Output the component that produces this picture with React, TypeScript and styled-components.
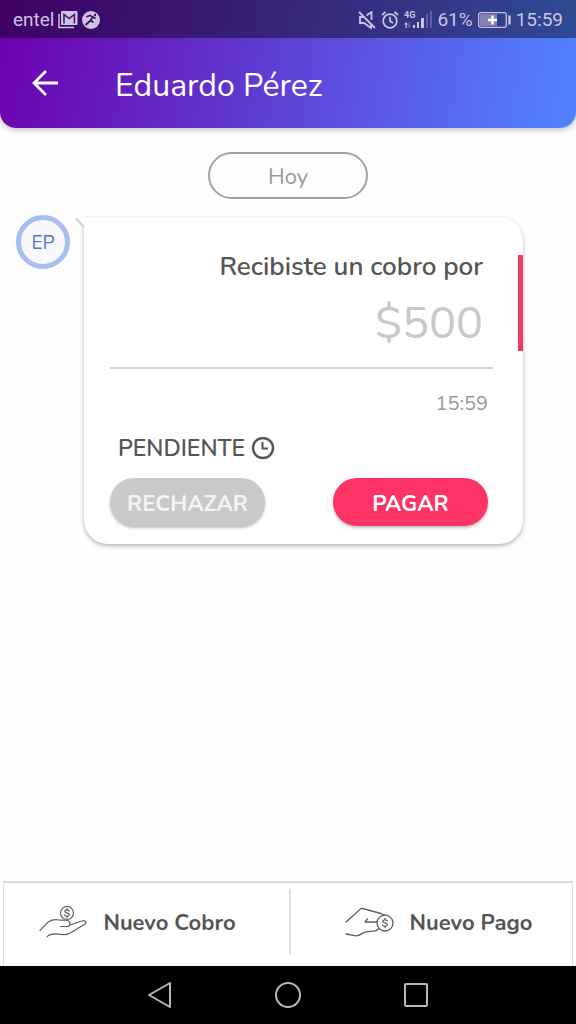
import React from "react";
import styled, { createGlobalStyle } from "styled-components";

const GlobalStyle = createGlobalStyle`
  *, *::before, *::after { box-sizing: border-box; }
  body {
    margin: 0;
    background: #fefefe;
    color: #555;
    font-family: Nunito, "Open Sans", "Noto Sans", sans-serif;
  }
  button { font-family: inherit; border: 0; padding: 0; cursor: pointer; }
  svg { display: block; flex: none; }
`;

const Screen = styled.div`
  display: flex;
  flex-direction: column;
  min-height: 100vh;
`;

const Header = styled.header`
  overflow: hidden;
  border-radius: 0 0 16px 16px;
  background: linear-gradient(100deg, #6d00ae 0%, #6031cb 38%, #5a5de8 70%, #5083ff 100%);
  box-shadow: 0 2px 6px rgba(0, 0, 0, 0.25);
`;

const StatusBar = styled.div`
  display: flex;
  align-items: center;
  justify-content: space-between;
  height: 38px;
  padding: 1px 13px 0;
  background: rgba(0, 0, 0, 0.42);
  color: #cdc3e3;
  font-family: Roboto, sans-serif;
  font-size: 19px;
  line-height: 24px;
`;

const StatusGroup = styled.div<{ $gap: number }>`
  display: flex;
  align-items: center;
  gap: ${(p) => p.$gap}px;
`;

const TitleBar = styled.div`
  display: flex;
  align-items: center;
  gap: 55px;
  height: 90px;
  padding: 0 30px;
`;

const BackButton = styled.button`
  background: none;
  color: #fff;
`;

const Title = styled.h1`
  margin: 0;
  padding-top: 5px;
  color: #fff;
  font-size: 32px;
  font-weight: 400;
  line-height: 40px;
`;

const Conversation = styled.main`
  display: flex;
  flex: 1;
  flex-direction: column;
  gap: 16px;
  padding: 24px 53px 24px 16px;
`;

const DayLabel = styled.div`
  align-self: center;
  width: 160px;
  height: 47px;
  margin-left: 37px;
  border: 2px solid #a2a2a2;
  border-radius: 24px;
  color: #999;
  font-size: 22px;
  line-height: 46px;
  text-align: center;
`;

const Message = styled.article`
  display: flex;
  align-items: flex-start;
  gap: 14px;
`;

const Avatar = styled.div`
  flex: none;
  width: 54px;
  height: 54px;
  border: 5px solid #a8bdf2;
  border-radius: 50%;
  background: #f9f9fb;
  color: #4d76cc;
  font-size: 19px;
  line-height: 46px;
  text-align: center;
`;

const Card = styled.section`
  position: relative;
  flex: 1;
  margin-top: 2px;
  padding: 30px 30px 18px 26px;
  border-radius: 0 24px 24px 24px;
  background: #fff;
  box-shadow: 0 2px 4px rgba(0, 0, 0, 0.3);
`;

const BubbleTail = styled.svg`
  position: absolute;
  top: 0;
  left: -9px;
`;

const Accent = styled.span`
  position: absolute;
  top: 38px;
  right: 0;
  width: 5px;
  height: 96px;
  background: #ee3a68;
`;

const Charge = styled.div`
  padding: 0 10px 13px 0;
  border-bottom: 2px solid #d2d2d2;
  text-align: right;
`;

const ChargeLabel = styled.h2`
  margin: 0;
  font-size: 26px;
  font-weight: 600;
  line-height: 40px;
`;

const Amount = styled.p`
  margin: 7px 0 0;
  color: #c8c8c8;
  font-size: 45px;
  font-weight: 400;
  line-height: 60px;
`;

const Time = styled.time`
  display: block;
  padding: 20px 5px 0 0;
  color: #999;
  font-size: 20px;
  font-weight: 400;
  line-height: 30px;
  text-align: right;
`;

const Status = styled.div`
  display: flex;
  align-items: center;
  gap: 6px;
  padding: 14px 8px 13px;
  font-size: 23px;
  font-weight: 600;
  line-height: 32px;
`;

const Actions = styled.div`
  display: flex;
  justify-content: space-between;
  padding-right: 5px;
`;

const ActionButton = styled.button<{ $primary?: boolean }>`
  width: 155px;
  height: 48px;
  padding-top: 3px;
  border-radius: 24px;
  background: ${(p) => (p.$primary ? "#fd3265" : "#c9c9c9")};
  box-shadow: 0 2px 3px rgba(0, 0, 0, 0.25);
  color: ${(p) => (p.$primary ? "#fff" : "#f5f5f5")};
  font-size: 22px;
  font-weight: 700;
  line-height: 32px;
`;

const Shortcuts = styled.nav`
  display: flex;
  height: 85px;
  margin: 0 3px;
  padding: 6px 0 12px;
  border: 1px solid #e2e2e2;
  border-top: 2px solid #d8d8d8;
  border-bottom: 0;
  background: #fff;
`;

const Shortcut = styled.button`
  display: flex;
  flex: 1;
  align-items: center;
  justify-content: center;
  gap: 16px;
  padding: 3px 18px 0 0;
  background: none;
  color: #555;
  font-size: 22px;
  font-weight: 700;
  line-height: 32px;

  & + & {
    padding: 3px 0 0 14px;
    border-left: 2px solid #dedede;
  }
`;

const SystemNav = styled.nav`
  display: flex;
  align-items: center;
  justify-content: center;
  gap: 100px;
  height: 58px;
  background: #000;
`;

const SystemButton = styled.button`
  background: none;
  color: #b8b8b8;
`;

const MailIcon = () => (
  <svg width="20" height="18" viewBox="0 0 20 18" fill="none" stroke="currentColor">
    <path d="M1 3v13.500h15" strokeWidth="1.500" />
    <rect x="3" y="0" width="16.500" height="14" rx="1" fill="currentColor" stroke="none" />
    <path d="M6 12.500V3.500l5.200 4 5.200-4v9" stroke="#3b136b" strokeWidth="1.500" />
  </svg>
);

const RunnerIcon = () => (
  <svg width="18" height="18" viewBox="0 0 18 18" fill="none">
    <circle cx="9" cy="9" r="9" fill="currentColor" />
    <g stroke="#3b136b" strokeWidth="1.800" strokeLinecap="round" strokeLinejoin="round">
      <path d="M5 5.500l3-1 3 1.500-2.500 3.500L4 13.500M8.500 9.500l2.500 1.500M10.500 6l2.500 1" />
    </g>
    <circle cx="13" cy="4" r="1.200" fill="#3b136b" />
    <circle cx="8" cy="14.800" r="1" fill="#e8d98a" />
  </svg>
);

const MuteIcon = () => (
  <svg width="18" height="18" viewBox="0 0 18 18" fill="none" stroke="currentColor" strokeWidth="1.800">
    <path d="M1 1l16 16M6 6H2v6h4l7 5v-4M8.500 4.500L13.500 1v8" />
  </svg>
);

const AlarmIcon = () => (
  <svg width="18" height="18" viewBox="0 0 18 18" fill="none" stroke="currentColor" strokeWidth="1.700">
    <circle cx="9" cy="10" r="6.800" />
    <path d="M9 5.800V10l3 2M1 4l3.500-3M17 4l-3.500-3" />
  </svg>
);

const SignalIcon = () => (
  <svg width="28" height="20" viewBox="0 0 28 20" fill="currentColor">
    <text x="0" y="8" fontFamily="Roboto, sans-serif" fontSize="9" fontWeight="700">4G</text>
    <path d="M0 14.500l2-2.500 2 2.500H2.800V18H1.500v-3.500z" />
    <path d="M4.500 12h1.200v3.500H7L5.200 18l-1.800-2.500h1.100z" opacity="0.4" />
    <path d="M9 15h2v3H9zM13 12h2v6h-2zM17 8h3v10h-3z" />
    <path d="M22 4h2v14h-2zM26 1h2v17h-2z" opacity="0.3" />
  </svg>
);

const BatteryIcon = () => (
  <svg width="33" height="16" viewBox="0 0 33 16" fill="none">
    <rect x="0.700" y="0.700" width="27.600" height="14.600" rx="2" stroke="currentColor" strokeWidth="1.300" />
    <rect x="2" y="2" width="17" height="12" fill="currentColor" opacity="0.5" />
    <path d="M14.500 3.500v9M10 8h9" stroke="#fff" strokeWidth="2.400" />
    <path d="M31.500 3.500v9" stroke="currentColor" strokeWidth="2.400" />
  </svg>
);

const BackIcon = () => (
  <svg width="30" height="30" viewBox="0 0 30 30" fill="none" stroke="currentColor" strokeWidth="2.800">
    <path d="M16 3L4 15l12 12M4 15h24" />
  </svg>
);

const ClockIcon = () => (
  <svg width="24" height="24" viewBox="0 0 24 24" fill="none" stroke="currentColor" strokeWidth="2.400">
    <circle cx="12" cy="11" r="10" />
    <path d="M11.500 5v6.500H17" strokeWidth="2" />
  </svg>
);

const Coin = ({ x, y, radius }: { x: number; y: number; radius: number }) => (
  <g transform={`translate(${x} ${y})`}>
    <circle r={radius} fill="#fff" />
    <path d="M2.300-2C1.800-3.600-2.100-3.700-2.200-1.600-2.200.2 2.400-.3 2.400 1.800 2.200 3.800-2 3.600-2.400 1.800M0-4.600v1.500M0 3.200v1.500" />
  </g>
);

const ReceiveIcon = () => (
  <svg width="48" height="34" viewBox="0 0 48 34" fill="none" stroke="#5f5f5f" strokeWidth="1.200" strokeLinecap="round" strokeLinejoin="round">
    <Coin x={28} y={7} radius={6.5} />
    <path d="M1 24.500c3-3 5.500-6.500 9-9 4-2.500 7-2 10-1.500 3 .6 6-.3 8.500.5 2 .7 2.800 2.200 2.500 3.800-.3 1.500-1.500 2.200-3 2.200h-6.500" />
    <path d="M31 19l12-4c3-1 5 1.200 3 3l-13 8c-3 2-6 3.300-10 2.500-6-1-12-1.500-15 2.500" />
  </svg>
);

const PayIcon = () => (
  <svg width="49" height="32" viewBox="0 0 49 32" fill="none" stroke="#5f5f5f" strokeWidth="1.300" strokeLinecap="round" strokeLinejoin="round">
    <path d="M1 15L15.500 2c.6-.6 1.400-.7 2.200-.5L36 6.500c2 .6 3 1.300 4 2.500" />
    <path d="M34 15H20l2.500-3" />
    <path d="M1 27l10 1.800c4 .6 6-3.300 10-4l9-1c2.500-.4 4-2 4.500-4" />
    <Coin x={40} y={16} radius={8} />
  </svg>
);

export default function App() {
  return (
    <>
      <GlobalStyle />
      <Screen>
        <Header>
          <StatusBar>
            <StatusGroup $gap={4}>
              <span>entel</span>
              <MailIcon />
              <RunnerIcon />
            </StatusGroup>
            <StatusGroup $gap={5}>
              <MuteIcon />
              <AlarmIcon />
              <SignalIcon />
              <span>61%</span>
              <BatteryIcon />
              <span>15:59</span>
            </StatusGroup>
          </StatusBar>
          <TitleBar>
            <BackButton aria-label="Volver">
              <BackIcon />
            </BackButton>
            <Title>Eduardo Pérez</Title>
          </TitleBar>
        </Header>

        <Conversation>
          <DayLabel>Hoy</DayLabel>
          <Message>
            <Avatar>EP</Avatar>
            <Card>
              <BubbleTail width="10" height="14" viewBox="0 0 10 14">
                <path d="M0 0h10v12z" fill="#fff" />
                <path d="M1 1.500l8 8.500" stroke="#cfcfcf" strokeWidth="2" fill="none" />
              </BubbleTail>
              <Accent />
              <Charge>
                <ChargeLabel>Recibiste un cobro por</ChargeLabel>
                <Amount>$500</Amount>
              </Charge>
              <Time>15:59</Time>
              <Status>
                PENDIENTE
                <ClockIcon />
              </Status>
              <Actions>
                <ActionButton>RECHAZAR</ActionButton>
                <ActionButton $primary>PAGAR</ActionButton>
              </Actions>
            </Card>
          </Message>
        </Conversation>

        <Shortcuts>
          <Shortcut>
            <ReceiveIcon />
            Nuevo Cobro
          </Shortcut>
          <Shortcut>
            <PayIcon />
            Nuevo Pago
          </Shortcut>
        </Shortcuts>

        <SystemNav>
          <SystemButton aria-label="Atrás">
            <svg width="28" height="28" viewBox="0 0 28 28" fill="none" stroke="currentColor" strokeWidth="2" strokeLinejoin="round">
              <path d="M24 2v24L3 14z" />
            </svg>
          </SystemButton>
          <SystemButton aria-label="Inicio">
            <svg width="28" height="28" viewBox="0 0 28 28" fill="none" stroke="currentColor" strokeWidth="2">
              <circle cx="14" cy="14" r="12" />
            </svg>
          </SystemButton>
          <SystemButton aria-label="Recientes">
            <svg width="28" height="28" viewBox="0 0 28 28" fill="none" stroke="currentColor" strokeWidth="2">
              <rect x="3" y="3" width="22" height="22" rx="1" />
            </svg>
          </SystemButton>
        </SystemNav>
      </Screen>
    </>
  );
}
